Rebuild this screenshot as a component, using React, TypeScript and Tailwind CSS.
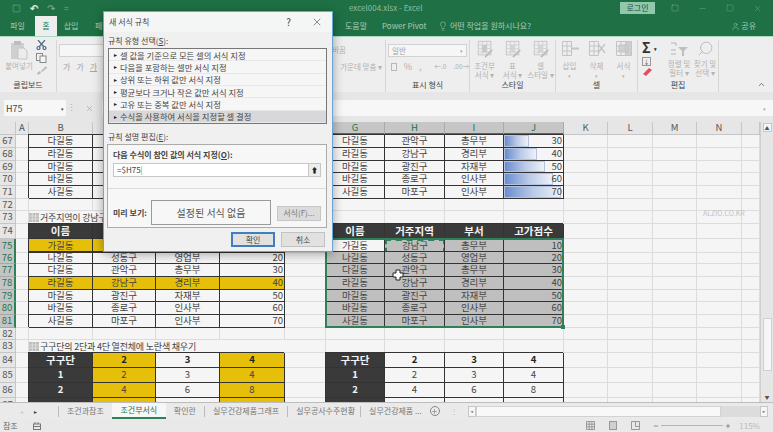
import type { ReactNode } from 'react';
import { ChevronUp, Lightbulb, Minus, Plus, Search, Square, User, X } from 'lucide-react';

const COLS = 'grid-cols-[16px_13px_64px_63px_64px_65px_41px_59px_60px_59px_60px_44px_45px_44px_45px_18px]';
const GRID = 'border-r border-b border-[#dcdcdc]';
const TABLE = 'border-r border-b border-[#333] shadow-[-1px_-1px_0_0_#333] flex items-center justify-center';
const DARK = 'bg-[#3a3a3a] text-[#f4f4f4] font-bold';
const YELLOW = 'bg-[#e5bf0a]';

const people: [string, string, string, number][] = [
  ['가길동', '강남구', '총무부', 10],
  ['나길동', '성동구', '영업부', 20],
  ['다길동', '관악구', '총무부', 30],
  ['라길동', '강남구', '경리부', 40],
  ['마길동', '광진구', '자재부', 50],
  ['바길동', '종로구', '인사부', 60],
  ['사길동', '마포구', '인사부', 70],
];

const ruleTypes = [
  '셀 값을 기준으로 모든 셀의 서식 지정',
  '다음을 포함하는 셀만 서식 지정',
  '상위 또는 하위 값만 서식 지정',
  '평균보다 크거나 작은 값만 서식 지정',
  '고유 또는 중복 값만 서식 지정',
  '수식을 사용하여 서식을 지정할 셀 결정',
];

function Empty({ n = 1 }: { n?: number }) {
  return (
    <>
      {Array.from({ length: n }).map((_, i) => (
        <div key={i} className={GRID} />
      ))}
    </>
  );
}

function RowNum({ n, on }: { n: number; on?: boolean }) {
  return (
    <div
      className={
        on
          ? 'bg-[#c4c4c4] border-r-2 border-r-[#2f8059] border-b border-b-[#a8a8a8] text-[#24734c] text-[9.5px] flex items-center justify-center'
          : 'bg-[#e6e6e6] border-r border-b border-[#c6c6c6] text-[#555] text-[9.5px] flex items-center justify-center'
      }
    >
      {n}
    </div>
  );
}

function Sheet({ h, children }: { h: string; children: ReactNode }) {
  return <div className={`grid ${COLS} ${h}`}>{children}</div>;
}

function Note({ text }: { text: string }) {
  return (
    <div className="col-span-4 flex items-center whitespace-nowrap text-[9px] tracking-[-0.2px] text-[#444] border-b border-[#dcdcdc]">
      <svg width="10" height="9" viewBox="0 0 10 9" className="mr-px shrink-0">
        <rect width="10" height="9" fill="#bdbdbd" />
        <path d="M0 3h10M0 6h10M3.3 0v9M6.6 0v9" stroke="#eee" strokeWidth="0.6" />
      </svg>
      {text}
    </div>
  );
}

function HeaderCells() {
  return (
    <>
      <div className={`${TABLE} ${DARK} text-[10.5px]`}>이름</div>
      <div className={`${TABLE} ${DARK} text-[10.5px]`}>거주지역</div>
      <div className={`${TABLE} ${DARK} text-[10.5px]`}>부서</div>
      <div className={`${TABLE} ${DARK} text-[10.5px]`}>고가점수</div>
    </>
  );
}

function Plain({ p, bg = '' }: { p: [string, string, string, number]; bg?: string }) {
  return (
    <>
      <div className={`${TABLE} ${bg}`}>{p[0]}</div>
      <div className={`${TABLE} ${bg}`}>{p[1]}</div>
      <div className={`${TABLE} ${bg}`}>{p[2]}</div>
      <div className={`${TABLE} ${bg} !justify-end pr-px`}>{p[3]}</div>
    </>
  );
}

function ColHead() {
  const cols = ['', 'A', 'B', 'C', 'D', 'E', 'F', 'G', 'H', 'I', 'J', 'K', 'L', 'M', 'N', ''];
  return (
    <div className={`grid ${COLS} h-[13px]`}>
      {cols.map((c, i) => {
        const on = c >= 'G' && c <= 'J';
        return (
          <div
            key={i}
            className={
              on
                ? 'bg-[#c6c6c6] border-r border-[#aaa] border-b-2 border-b-[#2f8059] text-[#24734c] text-[9.5px] flex items-center justify-center'
                : 'bg-[#e6e6e6] border-r border-b border-[#c6c6c6] text-[#555] text-[9.5px] flex items-center justify-center'
            }
          >
            {c}
          </div>
        );
      })}
    </div>
  );
}

function GridIcon({ accent = '#b5b5b5' }: { accent?: string }) {
  return (
    <svg width="18" height="18" viewBox="0 0 20 20" fill="none">
      <rect x="2.5" y="1.5" width="14" height="15" stroke="#c4c4c4" />
      <path d="M2.5 5.5h14M2.5 9.5h14M2.5 13.5h14M7 1.5v15M12 1.5v15" stroke="#d0d0d0" />
      <rect x="7" y="5.5" width="5" height="8" fill={accent} />
      <path d="M10 19l8-8" stroke="#bcbcbc" strokeWidth="2" />
    </svg>
  );
}

function CellIcon({ kind }: { kind: 'ins' | 'del' | 'fmt' }) {
  return (
    <svg width="20" height="17" viewBox="0 0 20 17" fill="none">
      <path d="M2.5 1.5h9v14h-9zM2.5 6h9M2.5 11h9M7 1.5v14" stroke="#c4c4c4" />
      {kind === 'ins' && <path d="M11 8.5h8" stroke="#c4c4c4" strokeWidth="2" />}
      {kind === 'del' && <path d="M11 4l7 9M18 4l-7 9" stroke="#c4c4c4" strokeWidth="1.4" />}
      {kind === 'fmt' && <path d="M11.5 1.5h6v14h-6zM5 5h9v7H5z" stroke="#c4c4c4" fill="#cfcfcf" />}
    </svg>
  );
}

function StyleBtn({ kind, a, b }: { kind: string; a: string; b: string }) {
  return (
    <div className="flex flex-col items-center w-[28px] text-[7.5px] leading-[9px] text-[#b2b2b2]">
      <GridIcon accent={kind} />
      <span className="mt-[3px] whitespace-nowrap">{a}</span>
      <span className="whitespace-nowrap">{b}</span>
    </div>
  );
}

function Group({ w, label, children }: { w: string; label: string; children: ReactNode }) {
  return (
    <div className={`${w} h-full flex flex-col border-r border-[#d6d6d6]`}>
      <div className="flex-1 min-h-0">{children}</div>
      <div className="h-[13px] text-center text-[8px] leading-[12px] text-[#444]">{label}</div>
    </div>
  );
}

function Ribbon() {
  return (
    <div className="h-[56px] bg-[#eeeeee] flex pt-[3px] shrink-0 border-t border-[#a9d8c3]">
      <Group w="w-[57px]" label="클립보드">
        <div className="flex pl-[4px]">
          <div className="w-[30px] flex flex-col items-center">
            <svg width="18" height="20" viewBox="0 0 18 20" fill="none">
              <rect x="1" y="3" width="13" height="16" fill="#cfcfcf" />
              <rect x="4" y="1" width="7" height="4" fill="#bdbdbd" />
              <path d="M8 8h6l3 3v8H8z" fill="#ececec" stroke="#c4c4c4" />
            </svg>
            <span className="mt-[2px] text-[7.5px] text-[#b2b2b2] whitespace-nowrap">붙여넣기</span>
          </div>
          <div className="flex flex-col gap-[3px] ml-[2px] text-[#666]">
            <svg width="11" height="10" viewBox="0 0 11 10" fill="none" stroke="#4e6a85" strokeWidth="1.2">
              <path d="M2 0l6 7M9 0L3 7" />
              <circle cx="2.5" cy="8" r="1.5" />
              <circle cx="8.5" cy="8" r="1.5" />
            </svg>
            <svg width="11" height="10" viewBox="0 0 11 10" fill="#f4f4f4" stroke="#888">
              <rect x="0.5" y="0.5" width="6" height="7" />
              <rect x="4" y="3" width="6" height="6.5" />
            </svg>
            <svg width="11" height="9" viewBox="0 0 11 9" fill="#bbb">
              <path d="M5 5l5-5 1 2-5 4zM1 7l3-2 1 2-3 2z" />
            </svg>
          </div>
        </div>
      </Group>
      <Group w="w-[150px]" label="글꼴">
        <div className="ml-[2px] mt-[4px] w-[120px] h-[13px] bg-[#f6f6f6] border border-[#d2d2d2]" />
        <div className="flex gap-[6px] pl-[6px] mt-[6px] text-[8px] text-[#a5a5a5]">
          <span>가</span>
          <span>가</span>
          <span className="underline">가</span>
        </div>
      </Group>
      <Group w="w-[179px]" label="맞춤">
        <div className="flex flex-col items-end pr-[3px] pt-[6px] gap-[9px] text-[7.5px] text-[#b2b2b2]">
          <span className="mr-[36px]">자동 줄 바꿈</span>
          <span>가운데 맞춤 ▾</span>
        </div>
      </Group>
      <Group w="w-[84px]" label="표시 형식">
        <div className="mx-[2px] mt-[4px] h-[13px] bg-[#f6f6f6] border border-[#d2d2d2] px-[3px] flex items-center justify-between text-[7.5px] text-[#a5a5a5]">
          <span>일반</span>
          <span className="text-[5px]">▾</span>
        </div>
        <div className="flex items-center pl-[5px] mt-[5px] gap-[7px] text-[9px] text-[#b0b0b0]">
          <span className="w-[10px] h-[8px] border border-[#b8b8b8]" />
          <span>%</span>
          <span className="mr-[6px]">,</span>
          <span className="text-[6.5px] leading-[7px]">←.0</span>
          <span className="text-[6.5px] leading-[7px]">.00→</span>
        </div>
      </Group>
      <Group w="w-[86px]" label="스타일">
        <div className="flex justify-center">
          <StyleBtn kind="#c8c8c8" a="조건부" b="서식 ▾" />
          <StyleBtn kind="#d4d4d4" a="표" b="서식 ▾" />
          <StyleBtn kind="#d4d4d4" a="셀" b="스타일 ▾" />
        </div>
      </Group>
      <Group w="w-[82px]" label="셀">
        <div className="flex justify-center gap-[3px] text-[7.5px] text-[#b2b2b2] leading-[10px]">
          {(
            [
              ['ins', '삽입'],
              ['del', '삭제'],
              ['fmt', '서식'],
            ] as const
          ).map(([k, t]) => (
            <div key={k} className="flex flex-col items-center w-[24px]">
              <CellIcon kind={k} />
              <span className="mt-[4px]">{t}</span>
              <span className="text-[5px]">▾</span>
            </div>
          ))}
        </div>
      </Group>
      <Group w="w-[81px]" label="편집">
        <div className="flex pl-[4px]">
          <div className="flex flex-col w-[24px] text-[#555] text-[6px]">
            <span className="text-[14px] leading-[14px] font-bold text-[#333]">Σ<span className="text-[5px] align-middle ml-[3px]">▾</span></span>
            <span className="w-[9px] h-[9px] border border-[#999] text-[6px] leading-[7px] text-center mt-[1px]">↓</span>
            <svg width="14" height="10" viewBox="0 0 14 10" className="mt-[1px]">
              <path d="M1 7l6-6 3 2-6 6z" fill="#e34b62" />
            </svg>
          </div>
          <div className="flex flex-col items-center w-[26px] text-[7.5px] leading-[9px] text-[#b2b2b2]">
            <svg width="20" height="17" viewBox="0 0 20 17" fill="none">
              <path d="M9 7h10l-4 4v5h-2v-5z" fill="#c0c0c0" />
              <path d="M2 3h5v3M2 10h5M2 14h5" stroke="#b5b5b5" />
            </svg>
            <span className="mt-[2px] whitespace-nowrap">정렬 및</span>
            <span className="whitespace-nowrap">필터 ▾</span>
          </div>
          <div className="flex flex-col items-center w-[26px] text-[7.5px] leading-[9px] text-[#b2b2b2]">
            <Search size={17} strokeWidth={1.2} className="text-[#b5b5b5] -scale-x-100" />
            <span className="mt-[2px] whitespace-nowrap">찾기 및</span>
            <span className="whitespace-nowrap">선택 ▾</span>
          </div>
        </div>
      </Group>
      <div className="flex-1 flex items-end justify-end pr-[7px] pb-[3px]">
        <ChevronUp size={9} strokeWidth={2} className="text-[#555]" />
      </div>
    </div>
  );
}

function Dialog() {
  return (
    <div className="absolute left-[103px] top-[11px] w-[230px] h-[241px] bg-[#f0f0f0] border border-[#6aa5d8] shadow-[0_2px_10px_rgba(0,0,0,0.35)] flex flex-col text-[8px] text-[#444]">
      <div className="h-[20px] bg-[#f4f6f6] flex items-center pl-[5px] pr-[9px] shrink-0">
        <span className="flex-1">새 서식 규칙</span>
        <span className="text-[10px] mr-[20px]">?</span>
        <X size={12} strokeWidth={1.2} />
      </div>
      <div className="px-[3px] flex flex-col flex-1">
        <div className="pl-px mt-[3px] h-[11px] leading-[11px]">규칙 유형 선택(<span className="underline">S</span>):</div>
        <div className="mt-[2px] ml-[1px] mr-[2px] h-[76px] bg-[#f6f6f6] border border-[#777] shrink-0 flex flex-col justify-between text-[8.3px]">
          {ruleTypes.map((r, i) => (
            <div key={r} className={`flex-1 flex items-center pl-[4px] border-b border-[#e8e8e8] ${i === 5 ? 'bg-[#d8d8da]' : ''}`}>
              <span className="text-[5px] mr-[2px] text-[#222]">►</span>
              {r}
            </div>
          ))}
        </div>
        <div className="pl-px mt-[7px] h-[11px] leading-[11px]">규칙 설명 편집(<span className="underline">E</span>):</div>
        <div className="mt-[2px] mr-[2px] h-[84px] bg-[#f7f7f7] border border-[#ababab] flex flex-col px-[5px] shrink-0">
          <div className="mt-[4px] font-bold h-[12px] leading-[12px]">다음 수식이 참인 값의 서식 지정(<span className="underline">O</span>):</div>
          <div className="mt-[2px] h-[14px] bg-white border border-[#c6c6c6] flex items-center justify-between pl-[3px]">
            <span>=$H75<span className="font-light">|</span></span>
            <span className="w-[12px] h-full bg-[#ededed] border-l border-[#c6c6c6] flex items-center justify-center text-[7px] text-[#222]">⬆</span>
          </div>
          <div className="mt-[11px] border-t border-[#dcdcdc] -mx-[5px]" />
          <div className="mt-[12px] flex items-center">
            <span className="font-bold w-[39px]">미리 보기:</span>
            <div className="w-[121px] h-[25px] bg-[#f7f7f7] border border-[#9a9a9a] flex items-center justify-center text-[10px] text-[#555] -mt-[1px]">설정된 서식 없음</div>
            <div className="ml-[6px] w-[45px] h-[15px] bg-[#dcdcdc] border border-[#c6c6c6] flex items-center justify-center text-[#777]">서식(F)...</div>
          </div>
        </div>
        <div className="mt-[4px] flex justify-end gap-[6px] pr-[4px]">
          <div className="w-[44px] h-[15px] bg-[#e1e1e1] border-2 border-[#3d7fbf] flex items-center justify-center">확인</div>
          <div className="w-[44px] h-[15px] bg-[#e1e1e1] border border-[#c2c2c2] flex items-center justify-center">취소</div>
        </div>
      </div>
    </div>
  );
}

export default function App() {
  return (
    <div className="relative w-[773px] h-[432px] overflow-hidden bg-[#e6e6e6] leading-none font-['Noto_Sans_CJK_KR','Liberation_Sans',sans-serif] flex flex-col">
      {/* title bar */}
      <div className="h-[16px] bg-[#1f7145] flex items-center shrink-0 text-[#8dbda3] relative">
        <div className="flex items-center gap-[9px] pl-[12px] w-[349px] text-[#7fb096]">
          <Square size={9} strokeWidth={1.4} />
          <span className="text-[#d5e6dc] text-[10px] leading-none font-bold">↶</span>
          <span className="text-[10px] leading-none">↷</span>
          <span className="text-[8px] leading-none">=</span>
        </div>
        <span className="text-[8px] w-[271px]">excel004.xlsx - Excel</span>
        <div className="w-[35px] h-[12px] bg-[#8fc8ad] text-[#2b4d3b] text-[8px] flex items-center justify-center">로그인</div>
        <Square size={8} strokeWidth={1.2} className="ml-[16px]" />
        <Minus size={9} strokeWidth={1} className="ml-[19px]" />
        <Square size={8} strokeWidth={1} className="ml-[19px]" />
        <X size={9} strokeWidth={1} className="ml-[19px]" />
      </div>
      {/* tabs */}
      <div className="h-[20px] bg-[#1f7145] flex items-center shrink-0 text-[8px] text-[#a9ccb9] whitespace-nowrap">
        <span className="w-[35px] shrink-0 text-center">파일</span>
        <span className="w-[22px] shrink-0 h-full bg-[#eeeeee] text-[#2a7a50] flex items-center justify-center">홈</span>
        <span className="w-[28px] shrink-0 text-center">삽입</span>
        <span className="w-[260px] shrink-0 pl-[10px]">페이지 레이아웃</span>
        <span className="w-[37px] shrink-0">도움말</span>
        <span className="w-[56px] shrink-0">Power Pivot</span>
        <Lightbulb size={10} strokeWidth={1.3} className="mr-[2px] shrink-0" />
        <span>어떤 작업을 원하시나요?</span>
        <User size={9} className="ml-auto mr-[1px]" strokeWidth={1.2} />
        <span className="mr-[17px]">공유</span>
      </div>
      <Ribbon />
      {/* formula bar */}
      <div className="h-[30px] shrink-0 pt-[8px] pb-[6px] flex items-stretch">
        <div className="w-[62px] ml-[4px] bg-[#f7f7f7] flex items-center justify-between px-[2px] text-[9px] text-[#444]">
          H75<span className="text-[5px]">▾</span>
        </div>
        <div className="w-[10px] text-[#aaa] text-[9px] text-center leading-[16px]">⋮</div>
        <div className="w-[26px] text-[#aaa] flex items-center justify-center"><X size={9} /></div>
        <div className="flex-1 bg-[#f7f7f7] flex items-center justify-end pr-[7px] text-[#aaa] text-[5px]">▾</div>
      </div>
      {/* sheet */}
      <div className="h-[280px] shrink-0 flex overflow-hidden">
        <div className="relative w-[760px] bg-[#f5f5f5] text-[9.5px] text-[#444] overflow-hidden">
          <ColHead />
          {people.slice(2).map((p, i) => (
            <Sheet key={p[0]} h={['h-[13px]', 'h-[13px]', 'h-[12px]', 'h-[13px]', 'h-[13px]'][i]}>
              <RowNum n={67 + i} />
              <Empty />
              <Plain p={p} />
              <Empty />
              <div className={TABLE}>{p[0]}</div>
              <div className={TABLE}>{p[1]}</div>
              <div className={TABLE}>{p[2]}</div>
              <div className={`${TABLE} relative !justify-end pr-px`}>
                <div
                  className="absolute left-0 top-0 bottom-0 bg-gradient-to-r from-[#6a8ccf] via-[#b9c9e6] to-[#eef1f8] border border-[#b5c2de]"
                  style={{ width: `${(p[3] / 70) * 97}%` }}
                />
                <span className="relative">{p[3]}</span>
              </div>
              <Empty n={5} />
            </Sheet>
          ))}
          <Sheet h="h-[12px]">
            <RowNum n={72} />
            <Empty n={15} />
          </Sheet>
          <Sheet h="h-[13px]">
            <RowNum n={73} />
            <Empty />
            <Note text="거주지역이 강남구인 행 전체에 노란색 채우기" />
            <Empty n={10} />
          </Sheet>
          <Sheet h="h-[15px]">
            <RowNum n={74} />
            <Empty />
            <HeaderCells />
            <Empty />
            <HeaderCells />
            <Empty n={5} />
          </Sheet>
          {people.map((p, i) => (
            <Sheet key={p[0]} h={['h-[13px]', 'h-[12px]', 'h-[13px]', 'h-[13px]', 'h-[12px]', 'h-[13px]', 'h-[13px]'][i]}>
              <RowNum n={75 + i} on />
              <Empty />
              <Plain p={p} bg={p[1] === '강남구' ? YELLOW : ''} />
              <Empty />
              <div className={`${TABLE} ${i === 0 ? '' : 'bg-[#bfbfbf]'}`}>{p[0]}</div>
              <div className={i === 0 ? 'bg-[#bfbfbf] border-2 border-dashed border-[#2f8059] flex items-center justify-center' : `${TABLE} bg-[#bfbfbf]`}>{p[1]}</div>
              <div className={`${TABLE} bg-[#bfbfbf]`}>{p[2]}</div>
              <div className={`${TABLE} bg-[#bfbfbf] !justify-end pr-px`}>{p[3]}</div>
              <Empty n={5} />
            </Sheet>
          ))}
          <Sheet h="h-[12px]">
            <RowNum n={82} />
            <Empty n={15} />
          </Sheet>
          <Sheet h="h-[13px]">
            <RowNum n={83} />
            <Empty />
            <Note text="구구단의 2단과 4단 열전체에 노란색 채우기" />
            <Empty n={10} />
          </Sheet>
          {[
            { n: 84, v: ['구구단', '2', '3', '4'] },
            { n: 85, v: ['1', '2', '3', '4'] },
            { n: 86, v: ['2', '4', '6', '8'] },
            { n: 87, v: ['', '', '', ''] },
          ].map((r) => (
            <Sheet key={r.n} h="h-[15px]">
              <RowNum n={r.n} />
              <Empty />
              <div className={`${TABLE} ${DARK} ${r.n === 84 ? 'text-[10.5px]' : ''}`}>{r.v[0]}</div>
              <div className={`${TABLE} ${YELLOW} ${r.n === 84 ? 'font-bold text-[#222]' : ''}`}>{r.v[1]}</div>
              <div className={`${TABLE} ${r.n === 84 ? 'font-bold text-[#222]' : ''}`}>{r.v[2]}</div>
              <div className={`${TABLE} ${YELLOW} ${r.n === 84 ? 'font-bold text-[#222]' : ''}`}>{r.v[3]}</div>
              <Empty />
              <div className={`${TABLE} ${DARK} ${r.n === 84 ? 'text-[10.5px]' : ''}`}>{r.v[0]}</div>
              <div className={`${TABLE} ${r.n === 84 ? 'font-bold text-[#222]' : ''}`}>{r.v[1]}</div>
              <div className={`${TABLE} ${r.n === 84 ? 'font-bold text-[#222]' : ''}`}>{r.v[2]}</div>
              <div className={`${TABLE} ${r.n === 84 ? 'font-bold text-[#222]' : ''}`}>{r.v[3]}</div>
              <Empty n={5} />
            </Sheet>
          ))}
          {/* selection outline */}
          <div className="absolute left-[325px] top-[116px] w-[239px] h-[90px] border-2 border-[#2f8059] pointer-events-none">
            <div className="absolute -right-[3px] -bottom-[3px] w-[4px] h-[4px] bg-[#2f8059]" />
          </div>
          {/* cursor */}
          <svg width="12" height="12" viewBox="0 0 12 12" className="absolute left-[392px] top-[147px]">
            <path d="M4 1h4v3h3v4H8v3H4V8H1V4h3z" fill="#fff" stroke="#222" />
          </svg>
        </div>
        {/* vertical scrollbar */}
        <div className="flex-1 bg-[#e6e6e6] border-l border-[#cfcfcf] flex flex-col items-center relative">
          <div className="mt-[1px] w-[9px] h-[9px] bg-[#f6f6f6] border border-[#c6c6c6] text-[5px] leading-[7px] text-center text-[#555]">▲</div>
          <div className="mt-[186px] w-[9px] h-[53px] bg-[#f6f6f6] border border-[#d0d0d0]" />
          <div className="mt-auto mb-[1px] w-[9px] h-[9px] text-[5px] leading-[9px] text-center text-[#555]">▼</div>
        </div>
      </div>
      {/* sheet tabs */}
      <div className="h-[17px] shrink-0 bg-[#eaeaea] border-t border-[#bdbdbd] flex items-center text-[8px] text-[#777] whitespace-nowrap">
        <span className="w-[24px] text-right text-[5px] text-[#ccc]">◄</span>
        <span className="w-[14px] text-right text-[5px] text-[#444]">►</span>
        <span className="ml-[20px] h-[11px] border-l border-[#bbb]" />
        <span className="ml-[8px]">조건과참조</span>
        <span className="ml-[8px] w-[54px] h-full bg-[#f7f7f7] border-b-2 border-[#2f8059] text-[#24734c] flex items-center justify-center">조건부서식</span>
        <span className="ml-[8px]">확인란</span>
        <span className="ml-[8px] h-[11px] border-l border-[#bbb]" />
        <span className="ml-[8px]">실무건강제품그래프</span>
        <span className="ml-[8px] h-[11px] border-l border-[#bbb]" />
        <span className="ml-[8px]">실무공사수주현황</span>
        <span className="ml-[5px] h-[11px] border-l border-[#bbb]" />
        <span className="ml-[8px]">실무건강제품 ...</span>
        <span className="ml-[8px] w-[10px] h-[10px] rounded-full border border-[#888] flex items-center justify-center"><Plus size={7} /></span>
        <span className="ml-[10px] text-[#bbb]">⋮</span>
        <div className="ml-[10px] flex-1 h-[11px] flex items-center mr-[5px] bg-[#dcdcdc]">
          <span className="w-[8px] h-full bg-[#f6f6f6] border border-[#c6c6c6] text-[4px] leading-[9px] text-center">◄</span>
          <span className="w-[245px] h-full bg-[#f8f8f8] border border-[#d2d2d2]" />
          <span className="ml-auto w-[8px] h-full bg-[#f6f6f6] border border-[#c6c6c6] text-[4px] leading-[9px] text-center">►</span>
        </div>
      </div>
      {/* status bar */}
      <div className="flex-1 bg-[#e9e9e9] flex items-center text-[8px] text-[#666] pr-[13px]">
        <span className="ml-[3px]">참조</span>
        <svg width="8" height="8" viewBox="0 0 8 8" className="ml-[15px]" fill="none" stroke="#777">
          <rect x="0.5" y="2" width="7" height="5.5" />
          <path d="M2 0v2M5 0v2M0 4.5h8" />
        </svg>
        <svg width="9" height="9" viewBox="0 0 9 9" className="ml-auto" fill="none" stroke="#999">
          <path d="M.5.5h8v8h-8zM.5 3.2h8M.5 5.9h8M3.2.5v8M5.9.5v8" />
        </svg>
        <span className="ml-[14px] w-[8px] h-[9px] bg-[#cfcfcf] border border-[#999]" />
        <svg width="9" height="9" viewBox="0 0 9 9" className="ml-[14px]" fill="none" stroke="#999">
          <path d="M.5.5h8v8h-8zM4.5.5v5h4" />
        </svg>
        <Minus size={6} strokeWidth={3} className="ml-[13px] text-[#777]" />
        <span className="mx-[2px] w-[62px] h-px bg-[#b5b5b5]" />
        <Plus size={6} strokeWidth={3} className="text-[#777]" />
        <span className="ml-[8px] text-[#bbb]">115%</span>
      </div>
      {/* watermark */}
      <span className="absolute left-[703px] top-[210px] text-[7px] text-[#c2c2c2]">ALZIO.CO.KR</span>
      <Dialog />
    </div>
  );
}
